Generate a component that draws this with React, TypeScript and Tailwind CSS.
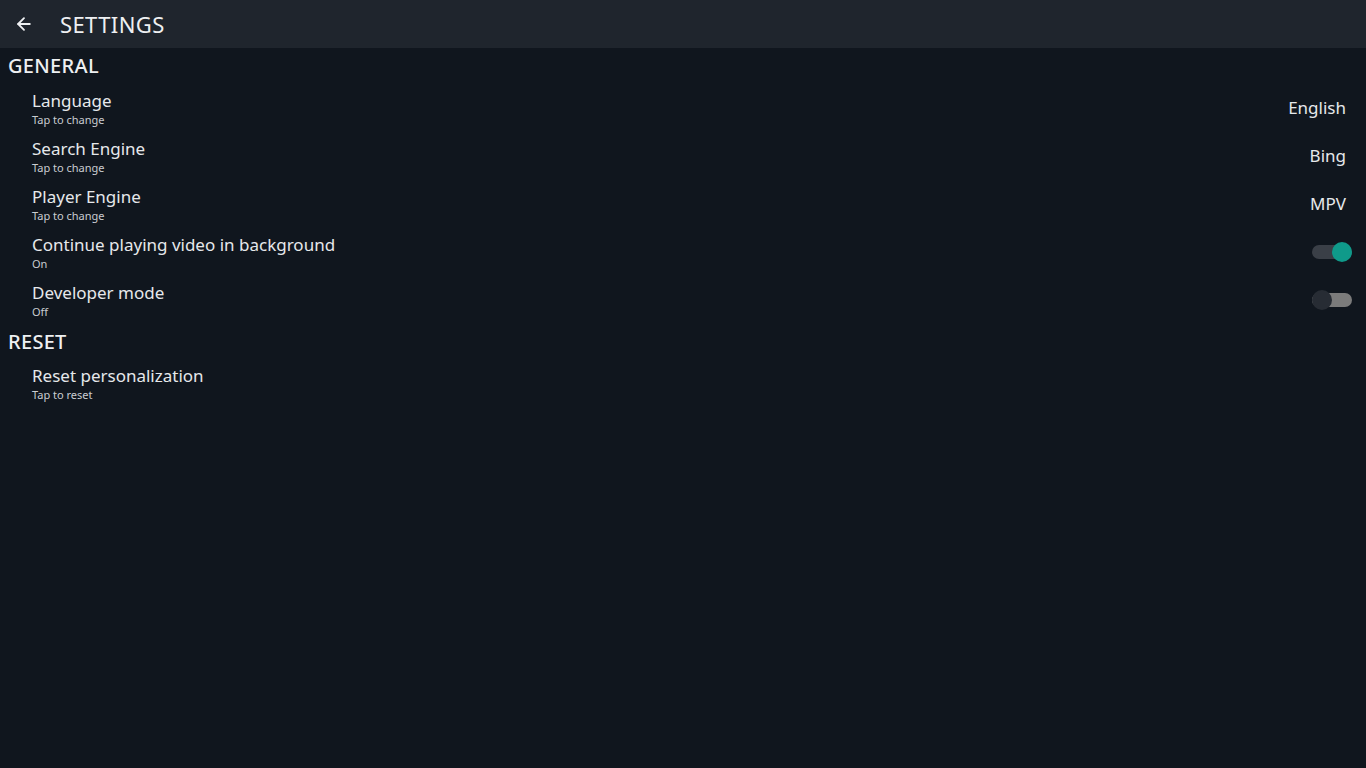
import { ArrowLeft } from "lucide-react";

type Row = {
  title: string;
  sub: string;
  value?: string;
  toggle?: boolean;
};

const GENERAL: Row[] = [
  { title: "Language", sub: "Tap to change", value: "English" },
  { title: "Search Engine", sub: "Tap to change", value: "Bing" },
  { title: "Player Engine", sub: "Tap to change", value: "MPV" },
  { title: "Continue playing video in background", sub: "On", toggle: true },
  { title: "Developer mode", sub: "Off", toggle: false },
];

const RESET: Row[] = [{ title: "Reset personalization", sub: "Tap to reset" }];

function Toggle({ on }: { on: boolean }) {
  return (
    <div className="relative w-[40px] h-[20px] -mr-[6px] flex items-center">
      <div
        className={`w-full h-[14px] rounded-full ${on ? "bg-[#3a3f47]" : "bg-[#7b7b7b]"}`}
      />
      {on ? (
        <span className="absolute right-0 top-0 w-[20px] h-[20px] rounded-full bg-[#0f9a8a]" />
      ) : (
        <span className="absolute left-0 top-0 w-[20px] h-[20px] rounded-full bg-[#272c34]" />
      )}
    </div>
  );
}

function SettingRow({ row }: { row: Row }) {
  return (
    <div className="h-12 flex items-center pl-8 pr-5">
      <div className="flex-1 flex flex-col justify-center">
        <span className="text-[17px] leading-[22px] text-[#e6e8eb]">{row.title}</span>
        <span className="text-[11px] leading-[14px] mt-[1px] text-[#c9ccd1]">{row.sub}</span>
      </div>
      {row.value && <span className="text-[17px] text-[#e6e8eb]">{row.value}</span>}
      {row.toggle !== undefined && <Toggle on={row.toggle} />}
    </div>
  );
}

export default function App() {
  return (
    <div
      className="w-full min-h-screen bg-[#10161e] text-white"
      style={{ fontFamily: '"Noto Sans", "Open Sans", sans-serif' }}
    >
      {/* Top bar */}
      <div className="h-12 bg-[#1f252d] flex items-center">
        <ArrowLeft className="ml-[14px] w-[20px] h-[20px] text-[#eef0f2]" strokeWidth={2.2} />
        <span className="ml-[26px] text-[22px] text-[#eef0f2] tracking-[0.4px]">SETTINGS</span>
      </div>

      <div className="h-9 flex items-center pl-2">
        <span className="text-[20px] font-medium text-[#eef0f2] tracking-[0.3px]">GENERAL</span>
      </div>
      {GENERAL.map((r) => (
        <SettingRow key={r.title} row={r} />
      ))}

      <div className="h-[35px] flex items-center pl-2">
        <span className="text-[20px] font-medium text-[#eef0f2] tracking-[0.3px]">RESET</span>
      </div>
      {RESET.map((r) => (
        <SettingRow key={r.title} row={r} />
      ))}
    </div>
  );
}
